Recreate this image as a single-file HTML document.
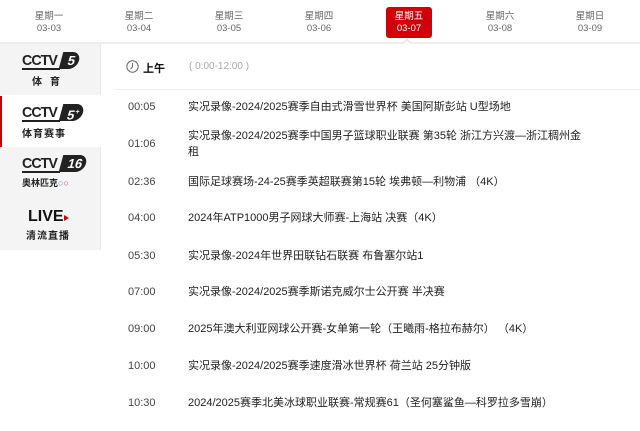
<!DOCTYPE html>
<html><head><meta charset="utf-8"><style>
*{margin:0;padding:0;box-sizing:border-box}
body{width:640px;height:431px;background:#fff;font-family:"Liberation Sans","Noto Sans CJK SC",sans-serif;position:relative;overflow:hidden;color:#333}
.tab{position:absolute;top:7px;width:46px;height:31px;text-align:center;font-size:9.5px;line-height:12px;color:#666;padding-top:4px}
.tab.on{background:#d0000a;color:#fff;border-radius:3px}
.hl{position:absolute;top:42px;left:0;width:640px;height:2px;background:#eee}
.side{position:absolute;left:0;width:101px;height:51px;background:#f4f4f4;border-right:1px solid #e8e8e8}
.side.on{background:#fff;border-left:2px solid #d0000a;border-right:none}
.logo{position:absolute;left:22px;top:8px;width:62px}
.cctv{font:bold 15px/14px "Liberation Sans",sans-serif;color:#222;letter-spacing:-1px;border-bottom:2px solid #222;width:40px;display:inline-block;transform:scaleX(0.95);transform-origin:left}
.pill{position:absolute;left:39px;top:0;height:17px;background:#222;color:#fff;font:bold 13px/17px "Liberation Sans",sans-serif;border-radius:0 9px 9px 0;padding:0 4px 0 7px;transform:skewX(-15deg)}
.cn{font-size:10px;font-weight:bold;color:#222;margin-top:3px;letter-spacing:1px}
.row{position:absolute;left:128px;font-size:11px;line-height:16px;color:#222}
.row .t{position:absolute;left:0;width:50px;color:#444}
.row .n{position:absolute;left:60px;width:395px}
</style></head><body>
<div class="tab" style="left:26px">星期一<br>03-03</div>
<div class="tab" style="left:116px">星期二<br>03-04</div>
<div class="tab" style="left:206px">星期三<br>03-05</div>
<div class="tab" style="left:296px">星期四<br>03-06</div>
<div class="tab on" style="left:386px">星期五<br>03-07</div>
<div class="tab" style="left:477px">星期六<br>03-08</div>
<div class="tab" style="left:567px">星期日<br>03-09</div>
<div class="hl"></div>
<div style="position:absolute;left:404px;top:40px;width:6px;height:6px;background:#fff;border-left:1px solid #ddd;border-top:1px solid #ddd;transform:rotate(45deg)"></div>

<div class="side" style="top:44px"><div class="logo"><span class="cctv">CCTV</span><span class="pill">5</span><div class="cn" style="padding-left:10px;letter-spacing:8px">体育</div></div></div>
<div class="side on" style="top:96px"><div class="logo" style="left:20px"><span class="cctv">CCTV</span><span class="pill">5<sup style="font-size:7px">+</sup></span><div class="cn">体育赛事</div></div></div>
<div class="side" style="top:147px"><div class="logo"><span class="cctv">CCTV</span><span class="pill">16</span><div class="cn" style="font-size:9px;letter-spacing:0">奥林匹克<span style="color:#4a90d9">○</span><span style="color:#e33">○</span></div></div></div>
<div class="side" style="top:198px;height:52px"><div class="logo" style="left:28px;top:11px"><div style="font:bold 16px/15px 'Liberation Sans',sans-serif;color:#111">LIVE<span style="display:inline-block;width:0;height:0;border-left:5px solid #d0000a;border-top:3px solid transparent;border-bottom:3px solid transparent"></span></div><div class="cn" style="margin-left:-2px">清流直播</div></div></div>

<svg style="position:absolute;left:126px;top:60px" width="13" height="13" viewBox="0 0 13 13"><circle cx="6.5" cy="6.5" r="5.7" fill="none" stroke="#666" stroke-width="1"/><path d="M6.5 3v4l-2 2" fill="none" stroke="#666"/></svg>
<div style="position:absolute;left:143px;top:60px;font-size:11px;font-weight:bold;color:#111">上午</div>
<div style="position:absolute;left:189px;top:61px;font-size:10px;color:#aaa">( 0:00-12:00 )</div>
<div style="position:absolute;left:115px;top:89px;width:525px;height:1px;background:#eee"></div>

<div class="row" style="top:99px"><span class="t">00:05</span><span class="n">实况录像-2024/2025赛季自由式滑雪世界杯 美国阿斯彭站 U型场地</span></div>
<div class="row" style="top:128px"><span class="t" style="top:8px">01:06</span><span class="n">实况录像-2024/2025赛季中国男子篮球职业联赛 第35轮 浙江方兴渡—浙江稠州金租</span></div>
<div class="row" style="top:174px"><span class="t">02:36</span><span class="n">国际足球赛场-24-25赛季英超联赛第15轮 埃弗顿—利物浦 （4K）</span></div>
<div class="row" style="top:210px"><span class="t">04:00</span><span class="n">2024年ATP1000男子网球大师赛-上海站 决赛（4K）</span></div>
<div class="row" style="top:248px"><span class="t">05:30</span><span class="n">实况录像-2024年世界田联钻石联赛 布鲁塞尔站1</span></div>
<div class="row" style="top:284px"><span class="t">07:00</span><span class="n">实况录像-2024/2025赛季斯诺克威尔士公开赛 半决赛</span></div>
<div class="row" style="top:321px"><span class="t">09:00</span><span class="n">2025年澳大利亚网球公开赛-女单第一轮（王曦雨-格拉布赫尔） （4K）</span></div>
<div class="row" style="top:358px"><span class="t">10:00</span><span class="n">实况录像-2024/2025赛季速度滑冰世界杯 荷兰站 25分钟版</span></div>
<div class="row" style="top:395px"><span class="t">10:30</span><span class="n">2024/2025赛季北美冰球职业联赛-常规赛61（圣何塞鲨鱼—科罗拉多雪崩）</span></div>
</body></html>
